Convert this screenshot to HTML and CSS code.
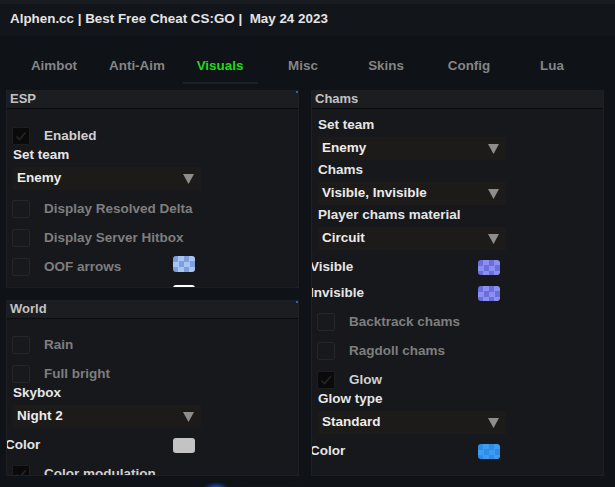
FILE: index.html
```html
<!DOCTYPE html>
<html>
<head>
<meta charset="utf-8">
<link rel="stylesheet" href="styles.css">
</head>
<body>
<div class="app">
  <header class="titlebar">Alphen.cc | Best Free Cheat CS:GO |&nbsp; May 24 2023</header>
  <nav class="tabs">
    <div class="tab">Aimbot</div>
    <div class="tab">Anti-Aim</div>
    <div class="tab active">Visuals</div>
    <div class="tab">Misc</div>
    <div class="tab">Skins</div>
    <div class="tab">Config</div>
    <div class="tab">Lua</div>
  </nav>
  <main class="content">
    <div class="col-left">
      <section class="panel panel-esp">
        <div class="panel-head">ESP</div>
        <div class="panel-body">
          <div class="cb-row first-esp on"><span class="cb checked"><svg width="16" height="16" viewBox="0 0 16 16"><path d="M3.5 8.5 L6.5 11.5 L12.5 4.5" fill="none" stroke="#262626" stroke-width="1.6"/></svg></span><span class="cb-label">Enabled</span></div>
          <div class="label">Set team</div>
          <div class="dd"><span>Enemy</span><svg width="11" height="10"><polygon points="0,0 11,0 5.5,10" fill="#8d8d8d"/></svg></div>
          <div class="cb-row after-dd"><span class="cb"></span><span class="cb-label">Display Resolved Delta</span></div>
          <div class="cb-row"><span class="cb"></span><span class="cb-label">Display Server Hitbox</span></div>
          <div class="cb-row"><span class="cb"></span><span class="cb-label fixed">OOF arrows</span><span class="swatch sw-lightblue top"></span></div>
          <div class="cb-row"><span class="cb"></span><span class="cb-label fixed"></span><span class="swatch sw-white top"></span></div>
        </div>
      </section>
      <section class="panel panel-world">
        <div class="panel-head">World</div>
        <div class="panel-body">
          <div class="cb-row first-world"><span class="cb"></span><span class="cb-label">Rain</span></div>
          <div class="cb-row"><span class="cb"></span><span class="cb-label">Full bright</span></div>
          <div class="label">Skybox</div>
          <div class="dd"><span>Night 2</span><svg width="11" height="10"><polygon points="0,0 11,0 5.5,10" fill="#8d8d8d"/></svg></div>
          <div class="color-row"><span class="color-label">Color</span><span class="swatch sw-gray"></span></div>
          <div class="cb-row on"><span class="cb checked"><svg width="16" height="16" viewBox="0 0 16 16"><path d="M3.5 8.5 L6.5 11.5 L12.5 4.5" fill="none" stroke="#262626" stroke-width="1.6"/></svg></span><span class="cb-label">Color modulation</span></div>
        </div>
      </section>
    </div>
    <section class="panel panel-chams">
      <div class="panel-head">Chams</div>
      <div class="panel-body">
        <div class="label first-chams">Set team</div>
        <div class="dd"><span>Enemy</span><svg width="11" height="10"><polygon points="0,0 11,0 5.5,10" fill="#8d8d8d"/></svg></div>
        <div class="label">Chams</div>
        <div class="dd"><span>Visible, Invisible</span><svg width="11" height="10"><polygon points="0,0 11,0 5.5,10" fill="#8d8d8d"/></svg></div>
        <div class="label">Player chams material</div>
        <div class="dd"><span>Circuit</span><svg width="11" height="10"><polygon points="0,0 11,0 5.5,10" fill="#8d8d8d"/></svg></div>
        <div class="color-row"><span class="color-label">Visible</span><span class="swatch sw-purple"></span></div>
        <div class="color-row"><span class="color-label">Invisible</span><span class="swatch sw-purple"></span></div>
        <div class="cb-row after-color"><span class="cb"></span><span class="cb-label">Backtrack chams</span></div>
        <div class="cb-row"><span class="cb"></span><span class="cb-label">Ragdoll chams</span></div>
        <div class="cb-row on"><span class="cb checked"><svg width="16" height="16" viewBox="0 0 16 16"><path d="M3.5 8.5 L6.5 11.5 L12.5 4.5" fill="none" stroke="#262626" stroke-width="1.6"/></svg></span><span class="cb-label">Glow</span></div>
        <div class="label">Glow type</div>
        <div class="dd"><span>Standard</span><svg width="11" height="10"><polygon points="0,0 11,0 5.5,10" fill="#8d8d8d"/></svg></div>
        <div class="color-row"><span class="color-label">Color</span><span class="swatch sw-blue"></span></div>
      </div>
    </section>
  </main>
</div>
</body>
</html>
```
FILE: styles.css
```css
html, body {
  margin: 0;
  padding: 0;
}
body {
  width: 615px;
  height: 487px;
  overflow: hidden;
  background:
    radial-gradient(ellipse 13px 6px at 216px 488px, #1c5ccc 0%, rgba(28,92,204,0.35) 60%, rgba(28,92,204,0) 100%),
    radial-gradient(ellipse 60px 5px at 268px 490px, #202227 0%, rgba(32,34,39,0) 100%),
    #0f1216;
  font-family: "Liberation Sans", Arial, sans-serif;
  font-weight: bold;
}
.app {
  display: flex;
  flex-direction: column;
}
.titlebar {
  height: 36px;
  box-sizing: border-box;
  padding: 2px 0 2px 10px;
  display: flex;
  align-items: center;
  background: linear-gradient(#191c21 0 4px, #12151a 4px);
  color: #e4e4e4;
  font-size: 13.4px;
  white-space: pre;
}
.tabs {
  display: flex;
  gap: 8px;
  padding: 0 0 6px 16.5px;
  background: #0f1216;
}
.tab {
  width: 75px;
  height: 48px;
  box-sizing: border-box;
  padding-top: 22px;
  line-height: 15px;
  text-align: center;
  color: #858585;
  font-size: 13.4px;
}
.tab.active {
  color: #22d71f;
  border-bottom: 2px solid #1d2024;
}
.content {
  display: flex;
  gap: 12px;
  padding-left: 6px;
}
.col-left {
  display: flex;
  flex-direction: column;
  gap: 12px;
  width: 293px;
}
.panel {
  position: relative;
  box-sizing: border-box;
  background: #16181c;
  border: 1px solid #1d1f23;
  display: flex;
  flex-direction: column;
  overflow: hidden;
}
.panel-esp { height: 198px; }
.panel-world { height: 176px; }
.panel-chams { width: 293px; height: 386px; }
.panel-head {
  flex: none;
  height: 17px;
  line-height: 16px;
  padding-left: 3px;
  background: #1b1d21;
  border-bottom: 1px solid #0b0c0e;
  color: #c2c2c2;
  font-size: 13px;
}
.panel-body {
  display: flex;
  flex-direction: column;
  font-size: 13.5px;
}
.cb-row {
  flex: none;
  display: flex;
  align-items: center;
  height: 18px;
  margin: 11px 0 0 5px;
  color: #7e7e7e;
}
.cb-row.on { color: #d0d0d0; }
.cb-row.first-esp { margin-top: 18px; }
.cb-row.first-world { margin-top: 17px; }
.cb-row.after-dd { margin-top: 10px; }
.cb-row.after-color { margin-top: 11px; }
.cb {
  flex: none;
  width: 18px;
  height: 18px;
  box-sizing: border-box;
  border: 1px solid #24262a;
  border-radius: 2px;
  background: #17191d;
  display: flex;
  align-items: center;
  justify-content: center;
}
.cb.checked {
  background: #0a0a0a;
  border-color: #1e1e1e;
}
.cb-label {
  margin-left: 14px;
  padding-bottom: 2px;
  white-space: nowrap;
}
.cb-label.fixed {
  flex: 0 0 129px;
  overflow: hidden;
}
.label {
  flex: none;
  height: 14px;
  line-height: 12px;
  margin: 4px 0 0 6px;
  color: #e6e6e6;
}
.label.first-chams { margin-top: 10px; }
.dd {
  flex: none;
  width: 188px;
  height: 23px;
  box-sizing: border-box;
  margin: 4px 0 0 6px;
  padding: 0 7px 0 4px;
  background: #1d1b1a;
  display: flex;
  align-items: center;
  justify-content: space-between;
  color: #ececec;
}
.dd span { padding-bottom: 2px; }
.color-row {
  flex: none;
  display: flex;
  align-items: center;
  height: 18px;
  margin: 8px 0 0 -2px;
  color: #e6e6e6;
}
.color-label {
  flex: 0 0 168px;
  padding-bottom: 2px;
}
.swatch {
  flex: none;
  width: 22px;
  height: 15px;
  border-radius: 3px;
}
.swatch.top {
  align-self: flex-start;
  margin-top: -2px;
  height: 16px;
}
.sw-lightblue {
  background: repeating-conic-gradient(#a9c4f2 0 25%, #7f9fdb 0 50%) 0 0 / 11px 11px;
}
.sw-white { background: #ffffff; }
.sw-gray { background: #c3c3c3; }
.sw-purple {
  background: repeating-conic-gradient(#8c8ff2 0 25%, #6a6fdc 0 50%) 0 0 / 11px 11px;
}
.sw-blue {
  background: repeating-conic-gradient(#3b9cf2 0 25%, #2f8be6 0 50%) 0 0 / 11px 11px;
}
.panel-esp::after,
.panel-world::after {
  content: "";
  position: absolute;
  right: 0;
  top: -1px;
  width: 2px;
  height: 3px;
  background: #2d5eb4;
}
```
